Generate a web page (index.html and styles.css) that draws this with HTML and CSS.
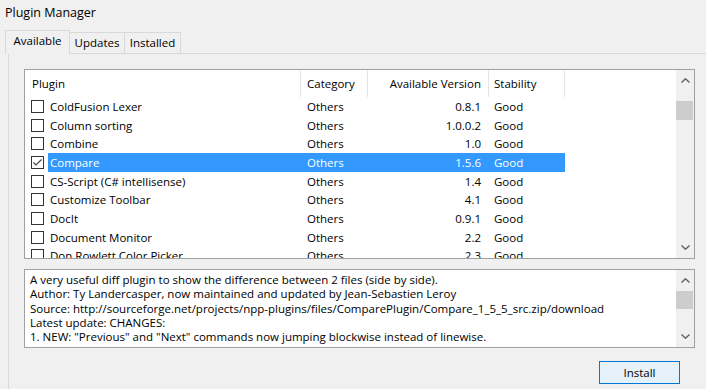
FILE: index.html
```html
<!DOCTYPE html>
<html>
<head>
<meta charset="utf-8">
<link rel="stylesheet" href="styles.css">
</head>
<body>
<div class="title">Plugin Manager</div>
<div class="tabs">
  <div class="tab active">Available</div>
  <div class="tab t-updates">Updates</div>
  <div class="tab t-installed">Installed</div>
</div>
<div class="panel">
  <div class="listbox">
    <div class="list">
      <div class="head">
        <div class="hc c-plugin">Plugin</div>
        <div class="hc c-cat">Category</div>
        <div class="hc c-ver">Available Version</div>
        <div class="hc c-stab">Stability</div>
      </div>
      <div class="rows">
        <div class="row"><span class="chk"></span><div class="cells"><span class="name">ColdFusion Lexer</span><span class="cat">Others</span><span class="ver">0.8.1</span><span class="stab">Good</span></div></div>
        <div class="row"><span class="chk"></span><div class="cells"><span class="name">Column sorting</span><span class="cat">Others</span><span class="ver">1.0.0.2</span><span class="stab">Good</span></div></div>
        <div class="row"><span class="chk"></span><div class="cells"><span class="name">Combine</span><span class="cat">Others</span><span class="ver">1.0</span><span class="stab">Good</span></div></div>
        <div class="row selected"><span class="chk checked"><svg width="11" height="11" viewBox="0 0 11 11"><polyline points="1.5,5.5 4,8 9.5,2.5" fill="none" stroke="#444" stroke-width="1.2"/></svg></span><div class="cells"><span class="name">Compare</span><span class="cat">Others</span><span class="ver">1.5.6</span><span class="stab">Good</span></div></div>
        <div class="row"><span class="chk"></span><div class="cells"><span class="name">CS-Script (C# intellisense)</span><span class="cat">Others</span><span class="ver">1.4</span><span class="stab">Good</span></div></div>
        <div class="row"><span class="chk"></span><div class="cells"><span class="name">Customize Toolbar</span><span class="cat">Others</span><span class="ver">4.1</span><span class="stab">Good</span></div></div>
        <div class="row"><span class="chk"></span><div class="cells"><span class="name">DocIt</span><span class="cat">Others</span><span class="ver">0.9.1</span><span class="stab">Good</span></div></div>
        <div class="row"><span class="chk"></span><div class="cells"><span class="name">Document Monitor</span><span class="cat">Others</span><span class="ver">2.2</span><span class="stab">Good</span></div></div>
        <div class="row"><span class="chk"></span><div class="cells"><span class="name">Don Rowlett Color Picker</span><span class="cat">Others</span><span class="ver">2.3</span><span class="stab">Good</span></div></div>
      </div>
    </div>
    <div class="vscroll">
      <div class="arrow"><svg width="9" height="5" viewBox="0 0 9 5"><polyline points="0.5,4.5 4.5,0.8 8.5,4.5" fill="none" stroke="#606060" stroke-width="1.4"/></svg></div>
      <div class="track"><div class="thumb list-thumb"></div></div>
      <div class="arrow"><svg width="9" height="5" viewBox="0 0 9 5"><polyline points="0.5,0.5 4.5,4.2 8.5,0.5" fill="none" stroke="#606060" stroke-width="1.4"/></svg></div>
    </div>
  </div>
  <div class="descbox">
    <div class="desc">A very useful diff plugin to show the difference between 2 files (side by side).<br>Author: Ty Landercasper, now maintained and updated by Jean-Sebastien Leroy<br>Source: http://sourceforge.net/projects/npp-plugins/files/ComparePlugin/Compare_1_5_5_src.zip/download<br>Latest update: CHANGES:<br>1. NEW: "Previous" and "Next" commands now jumping blockwise instead of linewise.</div>
    <div class="vscroll">
      <div class="arrow"><svg width="9" height="5" viewBox="0 0 9 5"><polyline points="0.5,4.5 4.5,0.8 8.5,4.5" fill="none" stroke="#606060" stroke-width="1.4"/></svg></div>
      <div class="track"><div class="thumb desc-thumb"></div></div>
      <div class="arrow"><svg width="9" height="5" viewBox="0 0 9 5"><polyline points="0.5,0.5 4.5,4.2 8.5,0.5" fill="none" stroke="#606060" stroke-width="1.4"/></svg></div>
    </div>
  </div>
  <div class="actions"><button class="btn">Install</button></div>
</div>
</body>
</html>
```

FILE: styles.css
```css
* { box-sizing: border-box; margin: 0; padding: 0; }
html, body { background: #f0f0f0; }
body {
  width: 706px;
  height: 389px;
  overflow: hidden;
  font-family: "Open Sans", "Noto Sans", sans-serif;
  font-size: 11.5px;
  color: #000;
}
.title {
  height: 30px;
  padding: 4px 0 0 5px;
  font-size: 12.5px;
  line-height: 18px;
}
.tabs {
  display: flex;
  align-items: flex-end;
  height: 23px;
  margin-left: 5px;
  position: relative;
  z-index: 1;
}
.tab {
  height: 21px;
  border: 1px solid #d9d9d9;
  border-bottom: none;
  border-left: none;
  text-align: center;
  line-height: 19px;
  background: #f0f0f0;
}
.tab.active {
  width: 65px;
  height: 24px;
  margin-bottom: -1px;
  border-left: 1px solid #d9d9d9;
  line-height: 19px;
  background: #f0f0f0;
}
.t-updates { width: 55px; }
.t-installed { width: 56px; }
.panel {
  margin-left: 8px;
  height: 336px;
  border-top: 1px solid #d9d9d9;
  border-left: 1px solid #d9d9d9;
  padding: 15px 0 0 15px;
}
.listbox {
  width: 671px;
  height: 190px;
  border: 1px solid #a0a0a0;
  background: #fff;
  display: flex;
}
.list {
  flex: 1;
  display: flex;
  flex-direction: column;
  overflow: hidden;
}
.head {
  display: flex;
  height: 27px;
  flex: none;
}
.hc {
  border-right: 1px solid #e5e5e5;
  line-height: 27px;
  white-space: nowrap;
}
.c-plugin { width: 276px; padding-left: 7px; }
.c-cat { width: 67px; padding-left: 6px; }
.c-ver { width: 121px; padding-right: 7px; text-align: right; }
.c-stab { width: 76px; padding-left: 5px; }
.rows {
  flex: 1;
  overflow: hidden;
}
.row {
  display: flex;
  align-items: center;
  height: 18.7px;
  white-space: nowrap;
}
.chk {
  width: 13px;
  height: 13px;
  margin: 0 4px 0 6px;
  border: 1px solid #333;
  background: #fff;
  flex: none;
  display: flex;
  align-items: center;
  justify-content: center;
}
.cells {
  display: flex;
  height: 100%;
  align-items: center;
  width: 517px;
}
.row.selected .cells {
  background: #3399ff;
  color: #fff;
}
.name { width: 253px; padding-left: 2px; }
.cat { width: 67px; padding-left: 6px; }
.ver { width: 121px; padding-right: 8px; text-align: right; }
.stab { width: 76px; padding-left: 5px; }
.vscroll {
  width: 18px;
  flex: none;
  background: #f0f0f0;
  display: flex;
  flex-direction: column;
}
.arrow {
  height: 21px;
  flex: none;
  display: flex;
  align-items: center;
  justify-content: center;
}
.arrow svg { display: block; }
.track {
  flex: 1;
  padding-right: 1px;
}
.thumb {
  background: #cdcdcd;
}
.list-thumb { margin-top: 10px; height: 19px; }
.desc-thumb { margin-top: 0; height: 18px; }
.descbox {
  margin-top: 10px;
  width: 671px;
  height: 79px;
  border: 1px solid #a0a0a0;
  background: #fff;
  display: flex;
}
.desc {
  flex: 1;
  padding: 3px 0 0 5px;
  line-height: 14.25px;
  white-space: nowrap;
  overflow: hidden;
}
.actions {
  display: flex;
  justify-content: flex-end;
  width: 671px;
  padding-right: 15px;
  margin-top: 13px;
}
.btn {
  width: 81px;
  height: 23px;
  border: 1px solid #0078d7;
  background: #e5f1fb;
  font-family: inherit;
  font-size: 11.5px;
  color: #000;
}
```
